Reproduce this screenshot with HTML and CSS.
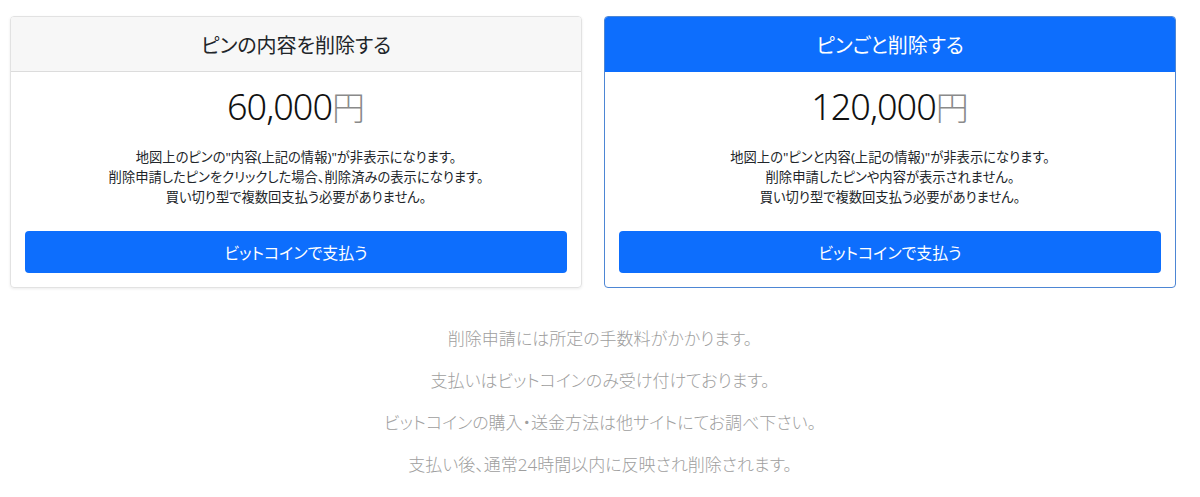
FILE: index.html
```html
<!DOCTYPE html>
<html lang="ja">
<head>
    <meta charset="UTF-8">
    <meta name="viewport" content="width=device-width, initial-scale=1.0">
    <title>ピンの削除申請</title>
    <link rel="stylesheet" href="styles.css">
</head>
<body>
    <div class="plans">
        <div class="card">
            <div class="card-header">
                <h4>ピンの内容を削除する</h4>
            </div>
            <div class="card-body">
                <h1 class="price">60,000<small>円</small></h1>
                <ul class="notes">
                    <li>地図上のピンの"内容(上記の情報)"が非表示になります。</li>
                    <li>削除申請したピンをクリックした場合、削除済みの表示になります。</li>
                    <li>買い切り型で複数回支払う必要がありません。</li>
                </ul>
                <button type="button" class="btn">ビットコインで支払う</button>
            </div>
        </div>

        <div class="card card-primary">
            <div class="card-header">
                <h4>ピンごと削除する</h4>
            </div>
            <div class="card-body">
                <h1 class="price">120,000<small>円</small></h1>
                <ul class="notes">
                    <li>地図上の"ピンと内容(上記の情報)"が非表示になります。</li>
                    <li>削除申請したピンや内容が表示されません。</li>
                    <li>買い切り型で複数回支払う必要がありません。</li>
                </ul>
                <button type="button" class="btn">ビットコインで支払う</button>
            </div>
        </div>
    </div>

    <div class="info">
        <p>削除申請には所定の手数料がかかります。</p>
        <p>支払いはビットコインのみ受け付けております。</p>
        <p>ビットコインの購入・送金方法は他サイトにてお調べ下さい。</p>
        <p>支払い後、通常24時間以内に反映され削除されます。</p>
    </div>
</body>
</html>
```

FILE: styles.css
```css
body {
    margin: 0;
    font-family: "Noto Sans", "Noto Sans CJK JP", sans-serif;
    font-feature-settings: "palt";
    color: #212529;
    background: #fff;
}
.plans {
    display: grid;
    grid-template-columns: 572px 572px;
    gap: 22px;
    padding: 16px 0 0 10px;
}
.card {
    border: 1px solid #e2e2e2;
    border-radius: 4px;
    box-shadow: 0 1px 3px rgba(0,0,0,0.08);
    overflow: hidden;
    text-align: center;
}
.card-header {
    height: 54px;
    display: flex;
    align-items: center;
    justify-content: center;
    background-color: #f7f7f7;
    border-bottom: 1px solid #dcdcdc;
}
.card-header h4 {
    margin: 0;
    font-size: 20px;
    font-weight: normal;
}
.card-primary {
    border-color: #4d86d4;
    box-shadow: none;
}
.card-primary .card-header {
    background-color: #0d6efd;
    border-bottom-color: #0d6efd;
    color: #fff;
}
.card-body {
    padding: 0 14px 14px;
}
.price {
    margin: 10px 0 14px;
    font-size: 36px;
    font-weight: 300;
    line-height: 50px;
    letter-spacing: -1px;
    color: #111;
}
.price small {
    font-size: 33px;
    font-weight: 300;
    color: #8a8a8a;
    letter-spacing: 0;
}
.notes {
    list-style: none;
    margin: 0 0 24px;
    padding: 0;
    font-size: 13.3px;
    line-height: 20px;
}
.btn {
    display: block;
    width: 100%;
    height: 42px;
    background-color: #0d6efd;
    color: #fff;
    border: none;
    border-radius: 4px;
    font-family: inherit;
    font-feature-settings: "palt";
    font-size: 16px;
    cursor: pointer;
}
.btn:hover {
    background-color: #0b5ed7;
}
.info {
    margin-top: 39px;
    text-align: center;
    color: #9e9e9e;
    font-size: 17px;
    font-weight: 300;
}
.info p {
    margin: 0 0 18px;
    line-height: 24px;
}
```
